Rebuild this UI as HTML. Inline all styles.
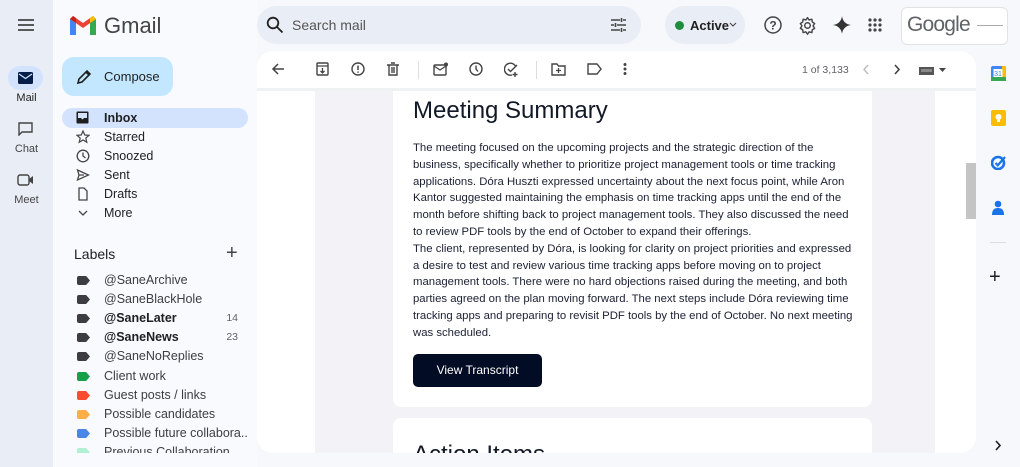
<!DOCTYPE html>
<html><head><meta charset="utf-8"><style>
*{box-sizing:border-box;margin:0;padding:0}
body{width:1020px;height:467px;overflow:hidden;background:#f6f8fc;font-family:"Liberation Sans",Arial,sans-serif;position:relative;color:#1f1f1f}
.abs{position:absolute}
.rail{left:0;top:0;width:53px;height:467px;background:#e9eef6}
.nav{left:53px;top:0;width:204px;height:467px;background:#f8fafd}
.ri{position:absolute;left:0;width:53px;text-align:center;font-size:11px;color:#444}
.item{position:absolute;left:62px;width:186px;height:20px;font-size:12.5px;color:#202124;line-height:20px;padding-left:42px}
.item svg{position:absolute;left:14px;top:3px}
.lab{position:absolute;left:62px;width:186px;height:19px;font-size:12.5px;color:#3c4043;line-height:19px;padding-left:42px;white-space:nowrap;overflow:hidden}
.lab i{position:absolute;left:15px;top:5px;width:13px;height:9px;clip-path:polygon(0 0,70% 0,100% 50%,70% 100%,0 100%);border-radius:2px}
.lab b{font-weight:bold;color:#202124}
.lab span{position:absolute;right:10px;font-size:10.5px;color:#5f6368}
.tb{position:absolute;top:62px}
p{font-size:11.35px;line-height:16.8px;color:#1b1f33;white-space:nowrap}
</style></head><body>
<div class="abs rail"></div>
<div class="abs nav"></div>
<svg class="abs" style="left:17px;top:18px" width="18" height="14"><path d="M1 2h16M1 7h16M1 12h16" stroke="#444" stroke-width="1.8"/></svg>
<svg class="abs" style="left:70px;top:16px" width="26" height="19" viewBox="0 0 26 19"><path d="M0 3v16h6V7z" fill="#4285f4"/><path d="M20 7v12h6V3z" fill="#34a853"/><path d="M0 3l13 9 13-9-3-3-10 7L3 0z" fill="#ea4335"/><path d="M20 7l6-4-3-3-3 2z" fill="#fbbc04"/><path d="M0 3l6 4V2L3 0z" fill="#c5221f"/></svg>
<div class="abs" style="left:104px;top:13px;font-size:22px;color:#444">Gmail</div>
<div class="abs" style="left:8px;top:66px;width:35px;height:24px;border-radius:12px;background:#d3e3fd"></div>
<svg class="abs" style="left:18px;top:72px" width="15" height="12"><rect width="15" height="12" rx="1.5" fill="#041e49"/><path d="M1 2l6.5 4.5L14 2" stroke="#d3e3fd" stroke-width="1.3" fill="none"/></svg>
<div class="ri" style="top:92px;color:#1f1f1f">Mail</div>
<svg class="abs" style="left:18px;top:122px" width="15" height="14"><path d="M1 1h13v9H4l-3 3z" fill="none" stroke="#444" stroke-width="1.4"/></svg>
<div class="ri" style="top:143px">Chat</div>
<svg class="abs" style="left:17px;top:174px" width="17" height="12"><rect x="1" y="1" width="11" height="10" rx="2" fill="none" stroke="#444" stroke-width="1.4"/><path d="M12 5l4-3v8l-4-3z" fill="#444"/></svg>
<div class="ri" style="top:194px">Meet</div>
<div class="abs" style="left:62px;top:57px;width:111px;height:39px;border-radius:12px;background:#c2e7ff"></div>
<svg class="abs" style="left:76px;top:69px" width="16" height="16"><path d="M2 14l1-4 8-8 3 3-8 8z M10 3l3 3" fill="none" stroke="#1f1f1f" stroke-width="1.6"/></svg>
<div class="abs" style="left:104px;top:69px;font-size:13px;color:#1f1f1f">Compose</div>
<div class="item" style="top:108px;background:#d3e3fd;border-radius:10px;font-weight:bold"><svg width="13" height="13"><rect x="0.5" y="0.5" width="12" height="12" rx="1" fill="#1f1f1f"/><path d="M2 2h9v5H8l-1.5 1.5L5 7H2z" fill="#d3e3fd"/></svg>Inbox</div>
<div class="item" style="top:127px"><svg width="14" height="14"><path d="M7 1l1.8 4 4.2.3-3.2 2.8 1 4.2L7 10l-3.8 2.3 1-4.2L1 5.3l4.2-.3z" fill="none" stroke="#444" stroke-width="1.2"/></svg>Starred</div>
<div class="item" style="top:146px"><svg width="14" height="14"><circle cx="7" cy="7" r="5.8" fill="none" stroke="#444" stroke-width="1.3"/><path d="M7 3.5V7l2.5 2" fill="none" stroke="#444" stroke-width="1.3"/></svg>Snoozed</div>
<div class="item" style="top:165px"><svg width="14" height="14"><path d="M1.5 2l11 5-11 5 1.5-5z M3 7h5" fill="none" stroke="#444" stroke-width="1.3"/></svg>Sent</div>
<div class="item" style="top:184px"><svg width="14" height="14"><path d="M3 1h5l3 3v9H3z" fill="none" stroke="#444" stroke-width="1.3"/></svg>Drafts</div>
<div class="item" style="top:203px"><svg width="14" height="14"><path d="M3 5l4 4 4-4" fill="none" stroke="#444" stroke-width="1.3"/></svg>More</div>
<div class="abs" style="left:74px;top:246px;font-size:14px;color:#1f1f1f">Labels</div>
<div class="abs" style="left:226px;top:243px;font-size:20px;color:#444;line-height:20px">+</div>
<div class="lab" style="top:271px"><i style="background:#3c3c42"></i>@SaneArchive</div>
<div class="lab" style="top:290px"><i style="background:#3c3c42"></i>@SaneBlackHole</div>
<div class="lab" style="top:309px"><i style="background:#3c3c42"></i><b>@SaneLater</b><span>14</span></div>
<div class="lab" style="top:328px"><i style="background:#3c3c42"></i><b>@SaneNews</b><span>23</span></div>
<div class="lab" style="top:347px"><i style="background:#3c3c42"></i>@SaneNoReplies</div>
<div class="lab" style="top:367px"><i style="background:#16a04a"></i>Client work</div>
<div class="lab" style="top:386px"><i style="background:#fb4c2f"></i>Guest posts / links</div>
<div class="lab" style="top:405px"><i style="background:#ffad47"></i>Possible candidates</div>
<div class="lab" style="top:424px"><i style="background:#4a86e8"></i>Possible future collabora...</div>
<div class="lab" style="top:443px;height:10px"><i style="background:#b3efd3"></i>Previous Collaboration</div>
<div class="abs" style="left:257px;top:6px;width:384px;height:38px;border-radius:19px;background:#e9eef6"></div>
<svg class="abs" style="left:266px;top:16px" width="18" height="18"><circle cx="7" cy="7" r="5.3" fill="none" stroke="#1f1f1f" stroke-width="1.8"/><path d="M11 11l5.5 5.5" stroke="#1f1f1f" stroke-width="1.8"/></svg>
<div class="abs" style="left:292px;top:17px;font-size:14px;color:#555">Search mail</div>
<svg class="abs" style="left:610px;top:17px" width="17" height="16"><path d="M1 3h9M13 3h3M1 8h3M7 8h9M1 13h9M13 13h3M11.5 1v4M5.5 6v4M11.5 11v4" stroke="#444" stroke-width="1.6"/></svg>
<div class="abs" style="left:665px;top:6px;width:80px;height:38px;border-radius:19px;background:#e9eef6"></div>
<div class="abs" style="left:675px;top:21px;width:9px;height:9px;border-radius:50%;background:#1e8e3e"></div>
<div class="abs" style="left:690px;top:18px;font-size:13px;font-weight:bold;color:#1f1f1f">Active</div>
<svg class="abs" style="left:729px;top:22px" width="8" height="5"><path d="M1 1l3 3 3-3" fill="none" stroke="#444" stroke-width="1.1"/></svg>
<svg class="abs" style="left:764px;top:16px" width="18" height="18"><circle cx="9" cy="9" r="8" fill="none" stroke="#444" stroke-width="1.5"/><text x="9" y="13.5" font-size="12" text-anchor="middle" font-family="Liberation Sans" font-weight="bold" fill="#444">?</text></svg>
<svg class="abs" style="left:798px;top:16px" width="19" height="19" viewBox="0 0 24 24"><path d="M12 2l2 3 3.5-1 .5 3.5 3 2-2 3 2 3-3 2-.5 3.5-3.5-1-2 3-2-3-3.5 1-.5-3.5-3-2 2-3-2-3 3-2 .5-3.5 3.5 1z" fill="none" stroke="#444" stroke-width="1.8" stroke-linejoin="round"/><circle cx="12" cy="12" r="3.5" fill="none" stroke="#444" stroke-width="1.8"/></svg>
<svg class="abs" style="left:833px;top:16px" width="18" height="18"><path d="M9 0C9.5 5 13 8.5 18 9 13 9.5 9.5 13 9 18 8.5 13 5 9.5 0 9 5 8.5 8.5 5 9 0z" fill="#333"/></svg>
<svg class="abs" style="left:868px;top:18px" width="14" height="14"><g fill="#444"><circle cx="2" cy="2" r="1.6"/><circle cx="7" cy="2" r="1.6"/><circle cx="12" cy="2" r="1.6"/><circle cx="2" cy="7" r="1.6"/><circle cx="7" cy="7" r="1.6"/><circle cx="12" cy="7" r="1.6"/><circle cx="2" cy="12" r="1.6"/><circle cx="7" cy="12" r="1.6"/><circle cx="12" cy="12" r="1.6"/></g></svg>
<div class="abs" style="left:901px;top:7px;width:107px;height:38px;border-radius:6px;background:#fff;border:1px solid #e3e3e3"></div>
<div class="abs" style="left:907px;top:13px;font-size:21px;color:#5f6368;letter-spacing:-0.8px">Google</div>
<div class="abs" style="left:977px;top:25px;width:26px;height:1px;background:#aaa"></div>
<div class="abs" style="left:257px;top:51px;width:719px;height:402px;border-radius:16px;background:#fff;overflow:hidden">
  <div class="abs" style="left:0;top:37px;width:719px;height:3px;background:#f0f1f3"></div>
  <div class="abs" style="left:58px;top:40px;width:620px;height:362px;background:#f2f2f7"></div>
  <div class="abs" style="left:709px;top:112px;width:10px;height:56px;background:#c4c4c4"></div>
  <div class="abs" style="left:136px;top:40px;width:479px;height:316px;background:#fff;border-radius:0 0 8px 8px">
    <div class="abs" style="left:20px;top:6px;font-size:24px;color:#111827">Meeting Summary</div>
    <p class="abs" style="left:20px;top:49px">The meeting focused on the upcoming projects and the strategic direction of the<br>business, specifically whether to prioritize project management tools or time tracking<br>applications. Dóra Huszti expressed uncertainty about the next focus point, while Aron<br>Kantor suggested maintaining the emphasis on time tracking apps until the end of the<br>month before shifting back to project management tools. They also discussed the need<br>to review PDF tools by the end of October to expand their offerings.<br>The client, represented by Dóra, is looking for clarity on project priorities and expressed<br>a desire to test and review various time tracking apps before moving on to project<br>management tools. There were no hard objections raised during the meeting, and both<br>parties agreed on the plan moving forward. The next steps include Dóra reviewing time<br>tracking apps and preparing to revisit PDF tools by the end of October. No next meeting<br>was scheduled.</p>
    <div class="abs" style="left:20px;top:263px;width:129px;height:33px;border-radius:5px;background:#020c24;color:#fff;font-size:12px;text-align:center;line-height:33px">View Transcript</div>
  </div>
  <div class="abs" style="left:136px;top:367px;width:479px;height:60px;background:#fff;border-radius:8px">
    <div class="abs" style="left:20px;top:23px;font-size:24px;color:#111827">Action Items</div>
  </div>
</div>
<svg class="tb" style="left:271px" width="14" height="14"><path d="M13 7H2M7 2L2 7l5 5" fill="none" stroke="#444" stroke-width="1.5"/></svg>
<svg class="tb" style="left:316px" width="13" height="14"><rect x="1" y="1" width="11" height="12" rx="1" fill="none" stroke="#444" stroke-width="1.4"/><path d="M1 4h11M6.5 6v5M4.5 9l2 2 2-2" fill="none" stroke="#444" stroke-width="1.3"/></svg>
<svg class="tb" style="left:351px" width="14" height="14"><circle cx="7" cy="7" r="6" fill="none" stroke="#444" stroke-width="1.4"/><path d="M7 3.5v4.5M7 9.5v1.2" stroke="#444" stroke-width="1.5"/></svg>
<svg class="tb" style="left:387px" width="12" height="14"><path d="M0 3h12M4 1h4M2 3v10h8V3M5 5v6M7 5v6" fill="none" stroke="#444" stroke-width="1.4"/></svg>
<div class="abs" style="left:418px;top:61px;width:1px;height:18px;background:#ddd"></div>
<svg class="tb" style="left:433px" width="15" height="14"><rect x="1" y="3" width="12" height="10" rx="1" fill="none" stroke="#444" stroke-width="1.4"/><path d="M1 4l6 4 6-4" fill="none" stroke="#444" stroke-width="1.3"/><circle cx="13" cy="2.5" r="2" fill="#444"/></svg>
<svg class="tb" style="left:469px" width="14" height="14"><circle cx="7" cy="7" r="6" fill="none" stroke="#444" stroke-width="1.4"/><path d="M7 3.5V7l2 2.5" fill="none" stroke="#444" stroke-width="1.4"/></svg>
<svg class="tb" style="left:504px" width="15" height="15"><path d="M12 5A6 6 0 1 0 8 13" fill="none" stroke="#444" stroke-width="1.4"/><path d="M4 7l2.5 2.5L13 3M11 10v5M8.5 12.5h5" fill="none" stroke="#444" stroke-width="1.4"/></svg>
<div class="abs" style="left:536px;top:61px;width:1px;height:18px;background:#ddd"></div>
<svg class="tb" style="left:551px" width="15" height="14"><path d="M1 2h5l1.5 2H14v9H1z" fill="none" stroke="#444" stroke-width="1.4"/><path d="M7.5 6v5M5 8.5h5" stroke="#444" stroke-width="1.3"/></svg>
<svg class="tb" style="left:587px" width="15" height="14"><path d="M1 2h9l4 5-4 5H1z" fill="none" stroke="#444" stroke-width="1.4"/></svg>
<svg class="tb" style="left:623px" width="4" height="14"><g fill="#444"><circle cx="2" cy="2.5" r="1.5"/><circle cx="2" cy="7" r="1.5"/><circle cx="2" cy="11.5" r="1.5"/></g></svg>
<div class="abs" style="left:802px;top:64px;font-size:10.5px;color:#5f6368">1 of 3,133</div>
<svg class="tb" style="left:862px;top:64px" width="8" height="11"><path d="M6 1L2 5.5 6 10" fill="none" stroke="#bbb" stroke-width="1.4"/></svg>
<svg class="tb" style="left:893px;top:64px" width="8" height="11"><path d="M2 1l4 4.5L2 10" fill="none" stroke="#444" stroke-width="1.6"/></svg>
<svg class="tb" style="left:919px;top:66px" width="28" height="9"><rect x="0" y="1" width="15" height="8" fill="#555"/><rect x="2" y="3" width="11" height="3" fill="#888"/><path d="M20 2h7l-3.5 4z" fill="#444"/></svg>
<svg class="abs" style="left:991px;top:66px" width="15" height="15"><rect width="15" height="15" rx="2" fill="#4285f4"/><rect x="0" y="11" width="15" height="4" fill="#34a853"/><rect x="11" y="0" width="4" height="11" fill="#fbbc04"/><rect x="2.5" y="3" width="9" height="8" fill="#fff"/><text x="7" y="10" font-size="7" text-anchor="middle" fill="#4285f4" font-family="Liberation Sans">31</text></svg>
<svg class="abs" style="left:991px;top:110px" width="15" height="16"><rect width="15" height="16" rx="2" fill="#fbbc04"/><circle cx="7.5" cy="7" r="3" fill="#fff"/><rect x="6" y="10" width="3" height="2" fill="#fff"/></svg>
<svg class="abs" style="left:991px;top:155px" width="15" height="15"><circle cx="7" cy="8" r="6" fill="none" stroke="#1a73e8" stroke-width="2.6"/><path d="M4.5 8l2.3 2.3L14 2" fill="none" stroke="#1a73e8" stroke-width="2.2"/></svg>
<svg class="abs" style="left:992px;top:200px" width="12" height="15"><circle cx="6" cy="4" r="3.3" fill="#1a73e8"/><path d="M0 15c0-5 2-7 6-7s6 2 6 7z" fill="#1a73e8"/></svg>
<div class="abs" style="left:990px;top:242px;width:16px;height:1px;background:#ddd"></div>
<div class="abs" style="left:989px;top:266px;font-size:20px;color:#1f1f1f">+</div>
<svg class="abs" style="left:994px;top:440px" width="8" height="11"><path d="M2 1l4 4.5L2 10" fill="none" stroke="#1f1f1f" stroke-width="1.6"/></svg>
</body></html>
